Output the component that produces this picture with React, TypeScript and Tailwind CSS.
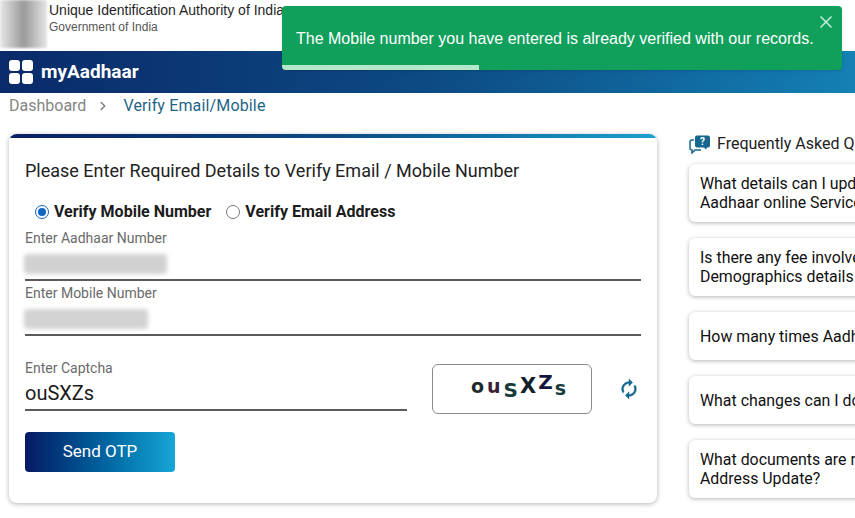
import { X, ChevronRight } from "lucide-react";

const roboto = "font-['Roboto',sans-serif]";

const faqs = [
  ["What details can I update using", "Aadhaar online Services?"],
  ["Is there any fee involved for updating", "Demographics details in Aadhaar?"],
  ["How many times Aadhaar can be updated?"],
  ["What changes can I do in Aadhaar?"],
  ["What documents are required for", "Address Update?"],
];

function Field({ label, blurW }: { label: string; blurW: string }) {
  return (
    <div className="h-[53px] mb-[2px] border-b-2 border-[#5a5a5a]">
      <div className="text-[14px] leading-[18px] text-[#6a6a6a] pt-[1px]">{label}</div>
      <div className={`mt-[7px] h-[20px] rounded-sm bg-[#d2d2d2] blur-[2px] -ml-[1px] ${blurW}`} />
    </div>
  );
}

export default function App() {
  return (
    <div className={`relative w-[855px] h-[518px] overflow-hidden bg-white ${roboto}`}>
      {/* top header */}
      <div className="flex h-[51px] items-start">
        <div className="w-[47px] h-[48px] bg-gradient-to-r from-[#e8e8e8] via-[#9a9a9a] to-[#e6e6e6] blur-[1px]" />
        <div className="ml-[2px] pt-[2px]">
          <div className="font-['Liberation_Sans',sans-serif] text-[14px] leading-[17px] text-[#1f1f1f] whitespace-nowrap">
            Unique Identification Authority of India
          </div>
          <div className="font-['Liberation_Sans',sans-serif] text-[12px] leading-[16px] text-[#555]">
            Government of India
          </div>
        </div>
      </div>

      {/* nav bar */}
      <div className="flex h-[42px] items-center pl-[9px] bg-gradient-to-r from-[#0a2a69] via-[#0d4a83] to-[#1480b4]">
        <div className="grid grid-cols-2 gap-[2px]">
          <span className="h-[11px] w-[11px] rounded-[3px] bg-white" />
          <span className="h-[11px] w-[11px] rounded-[3px] bg-white" />
          <span className="h-[11px] w-[11px] rounded-[3px] bg-white" />
          <span className="h-[11px] w-[11px] rounded-[3px] bg-white" />
        </div>
        <span className="ml-[8px] text-[19px] font-bold text-white">myAadhaar</span>
      </div>

      {/* breadcrumb */}
      <div className="flex h-[25px] items-center pl-[9px] text-[16px]">
        <span className="text-[#858585]">Dashboard</span>
        <ChevronRight size={14} strokeWidth={2.5} className="ml-[10px] text-[#7d7d7d]" />
        <span className="ml-[13px] text-[#1f6487] tracking-[0.15px]">Verify Email/Mobile</span>
      </div>

      <div className="flex items-start pl-[9px] pt-[16px]">
        {/* form card */}
        <div className="w-[648px] h-[369px] shrink-0 rounded-lg bg-white shadow-[0_1px_5px_rgba(0,0,0,0.3)] overflow-hidden">
          <div className="h-[4px] bg-gradient-to-r from-[#0a1f63] via-[#0d4a83] to-[#19a0d0]" />
          <div className="pl-[16px] pr-[16px]">
            <h1 className="pt-[22px] text-[18px] leading-[22px] font-normal text-[#222]">
              Please Enter Required Details to Verify Email / Mobile Number
            </h1>
            <div className="flex items-center pl-[10px] mt-[20px] h-[20px] text-[16px] font-bold text-[#1c1c1c]">
              <span className="flex h-[14px] w-[14px] items-center justify-center rounded-full border-[1.5px] border-[#1266c4]">
                <span className="h-[8px] w-[8px] rounded-full bg-[#1266c4]" />
              </span>
              <span className="ml-[5px]">Verify Mobile Number</span>
              <span className="ml-[15px] h-[14px] w-[14px] rounded-full border-[1.5px] border-[#7a7a7a]" />
              <span className="ml-[5px]">Verify Email Address</span>
            </div>
            <div className="mt-[6px]">
              <Field label="Enter Aadhaar Number" blurW="w-[143px]" />
              <Field label="Enter Mobile Number" blurW="w-[124px]" />
            </div>
            <div className="mt-[23px] flex items-start">
              <div className="w-[382px] h-[52px] border-b-2 border-[#5a5a5a]">
                <div className="text-[14px] leading-[18px] text-[#6a6a6a]">Enter Captcha</div>
                <div className="mt-[2px] text-[20px] leading-[28px] text-[#1a1a1a]">ouSXZs</div>
              </div>
              <div className="ml-[25px] mt-[5px] flex h-[50px] w-[160px] items-center rounded-md border border-[#8a8a8a] pl-[38px] font-['DejaVu_Sans',sans-serif] leading-none">
                <span className="text-[19px] font-bold text-[#1c2a2a] -translate-y-[3px]">o</span>
                <span className="ml-[3px] text-[19px] font-bold text-[#3a2035] -translate-y-[3px]">u</span>
                <span className="ml-[3px] text-[20px] font-bold text-[#173a3a] translate-y-[1px]">S</span>
                <span className="ml-[2px] text-[21px] font-bold text-[#12202a] -translate-y-[3px]">X</span>
                <span className="ml-[2px] text-[20px] font-bold text-[#14143c] -translate-y-[7px]">Z</span>
                <span className="ml-[2px] text-[19px] font-bold text-[#173a3a] -translate-y-[1px]">s</span>
              </div>
              <svg width="22" height="22" viewBox="0 0 24 24" className="ml-[26px] mt-[19px] -scale-x-100 text-[#14688f]">
                <path
                  d="M12 4V1L8 5l4 4V6c3.31 0 6 2.69 6 6 0 1.01-.25 1.97-.7 2.8l1.46 1.46C19.54 15.03 20 13.57 20 12c0-4.42-3.58-8-8-8zm0 14c-3.31 0-6-2.69-6-6 0-1.01.25-1.97.7-2.8L5.24 7.74C4.46 8.97 4 10.43 4 12c0 4.42 3.58 8 8 8v3l4-4-4-4v3z"
                  fill="currentColor"
                  stroke="currentColor"
                  strokeWidth="0.5"
                />
              </svg>
            </div>
            <button className="mt-[18px] h-[40px] w-[150px] rounded-[4px] bg-gradient-to-r from-[#061a63] to-[#17a7d6] text-[17px] text-white">
              Send OTP
            </button>
          </div>
        </div>

        {/* faq column */}
        <div className="ml-[32px] w-[300px] shrink-0">
          <div className="flex items-center h-[20px]">
            <svg width="22" height="20" viewBox="0 0 22 20" className="shrink-0">
              <path d="M8 1.5h11a2 2 0 0 1 2 2v8a2 2 0 0 1-2 2h-1l-1 2-2-2H8a2 2 0 0 1-2-2v-8a2 2 0 0 1 2-2z" fill="#14688f" />
              <path d="M5 6H3a2 2 0 0 0-2 2v6a2 2 0 0 0 2 2v3l3-3h6" fill="none" stroke="#14688f" strokeWidth="1.5" />
              <text x="13.5" y="11" textAnchor="middle" fontSize="10" fontWeight="700" fill="#fff" fontFamily="Roboto, sans-serif">?</text>
            </svg>
            <span className="ml-[6px] text-[16px] text-[#222] whitespace-nowrap">Frequently Asked Questions</span>
          </div>
          <div className="mt-[10px] flex flex-col gap-[16px]">
            {faqs.map((lines, i) => (
              <div
                key={i}
                className="flex min-h-[48px] flex-col justify-center rounded-md bg-white px-[11px] py-[10px] text-[15.9px] leading-[19px] text-[#111] whitespace-nowrap shadow-[0_1px_4px_rgba(0,0,0,0.3)]"
              >
                {lines.map((l) => (
                  <div key={l}>{l}</div>
                ))}
              </div>
            ))}
          </div>
        </div>
      </div>

      {/* toast */}
      <div className="absolute left-[282px] top-[6px] h-[64px] w-[560px] overflow-hidden rounded-[4px] bg-[#10a05b] text-white shadow-sm">
        <div className="pl-[14px] pt-[23px] font-['Liberation_Sans',sans-serif] text-[16px] leading-[20px] whitespace-nowrap">
          The Mobile number you have entered is already verified with our records.
        </div>
        <X size={20} strokeWidth={2} className="absolute right-[6px] top-[6px] text-[#c5ecd6]" />
        <div className="absolute bottom-0 left-0 h-[5px] w-[197px] bg-[#b5e8ca]" />
      </div>
    </div>
  );
}
